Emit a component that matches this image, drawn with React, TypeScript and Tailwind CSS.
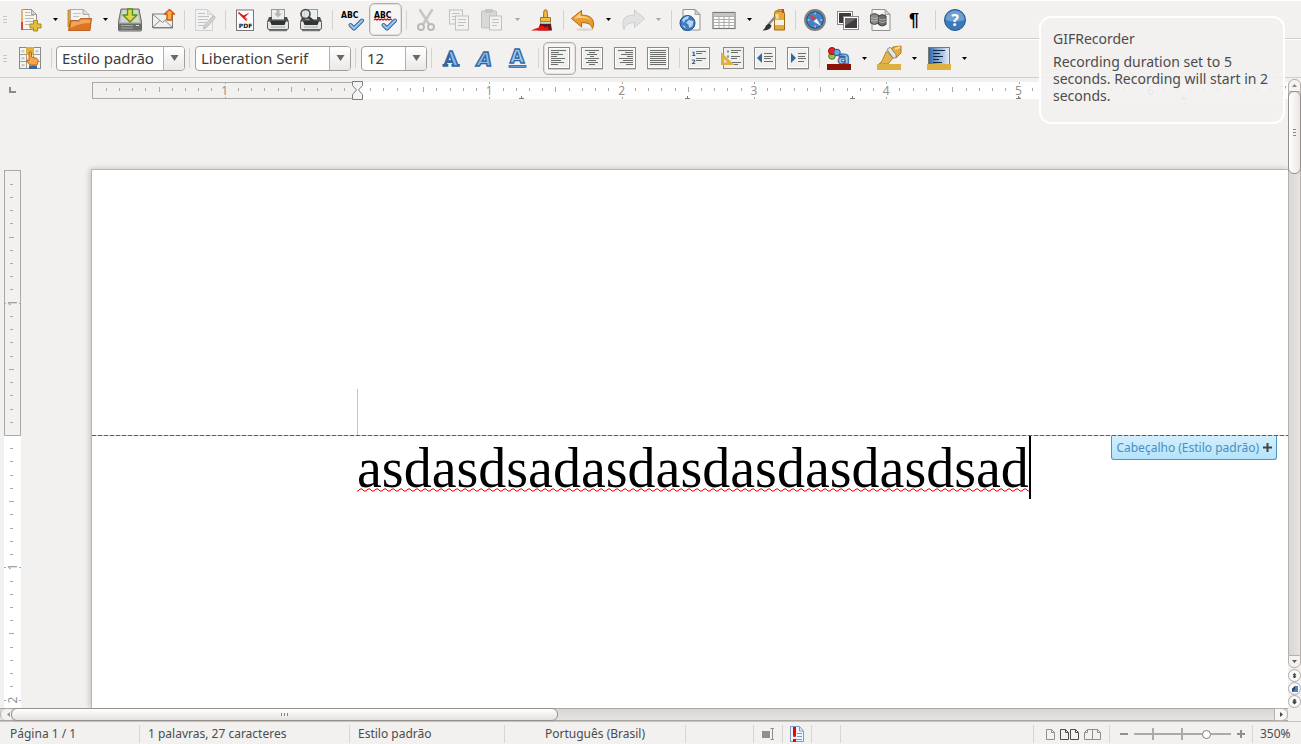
import type { ReactNode } from "react";

const UI = "font-['Noto_Sans','Open_Sans',sans-serif]";
const INCH = 132.3;

function Icon({ children }: { children: ReactNode }) {
  return (
    <svg viewBox="0 0 24 24" className="h-6 w-6 shrink-0 overflow-visible" aria-hidden="true">
      {children}
    </svg>
  );
}

type ToolProps = { label: string; children: ReactNode; active?: boolean; faded?: boolean };

function Tool({ label, children, active, faded }: ToolProps) {
  return (
    <button
      type="button"
      aria-label={label}
      aria-pressed={active}
      disabled={faded}
      className={
        active
          ? "flex h-[33px] w-[33px] shrink-0 items-center rounded-[5px] border border-[#b3aea9] bg-[#f7f6f5] pl-[3px] shadow-[inset_0_0_0_1px_#e2dfdc]"
          : faded
            ? "flex h-[33px] w-[33px] shrink-0 items-center pl-1 opacity-35 grayscale"
            : "flex h-[33px] w-[33px] shrink-0 items-center pl-1"
      }
    >
      <Icon>{children}</Icon>
    </button>
  );
}

function Caret({ label, faded }: { label: string; faded?: boolean }) {
  return (
    <button type="button" aria-label={label} className="flex h-[33px] w-[17px] shrink-0 items-center justify-center pr-px">
      <svg viewBox="0 0 5 3" className="h-[3px] w-[5px]">
        <path d="M0 0h5L2.500 3z" fill={faded ? "#a8a5a2" : "#000"} />
      </svg>
    </button>
  );
}

function Sep() {
  return (
    <div className="flex w-2 shrink-0 justify-center">
      <div className="h-5 w-px bg-[#d5d2cf]" />
    </div>
  );
}

function Grip() {
  return (
    <div className="flex w-[14px] shrink-0 flex-col gap-[2px] pl-[3px]">
      <div className="h-px w-1 bg-[#c9c6c3]" />
      <div className="h-px w-1 bg-[#c9c6c3]" />
      <div className="h-px w-1 bg-[#c9c6c3]" />
    </div>
  );
}

function Combo({ label, value, width }: { label: string; value: string; width: string }) {
  return (
    <div className={`grid h-[25px] shrink-0 overflow-hidden rounded-[4px] border border-[#a39e99] bg-white ${width}`}>
      <select
        aria-label={label}
        defaultValue={value}
        className="col-start-1 row-start-1 appearance-none bg-transparent pl-[5px] text-[15px] leading-[22px] text-[#3c3c3c] outline-none"
      >
        <option>{value}</option>
      </select>
      <span className="pointer-events-none col-start-1 row-start-1 flex w-[21px] items-center justify-center justify-self-end border-l border-[#b5b0ab] bg-gradient-to-b from-white to-[#ebe9e7]">
        <svg viewBox="0 0 9 6" className="h-[6px] w-[9px]">
          <path d="M.5 0h8L4.500 6z" fill="#6b6763" />
        </svg>
      </span>
    </div>
  );
}

function Check() {
  return (
    <>
      <path d="M10.500 17l3.500 3.500 8-8" fill="none" stroke="#2d5f9c" strokeWidth="4" strokeLinecap="round" strokeLinejoin="round" />
      <path d="M10.500 17l3.500 3.500 8-8" fill="none" stroke="#9cc6ee" strokeWidth="2.200" strokeLinecap="round" strokeLinejoin="round" />
    </>
  );
}

function Abc() {
  return (
    <text x="1" y="10" fontSize="8.500" fontWeight="700" fontFamily="DejaVu Sans Condensed, DejaVu Sans" fill="#000">
      ABC
    </text>
  );
}

function Sheet({ x = 3, y = 1.5, w = 17, h = 21 }: { x?: number; y?: number; w?: number; h?: number }) {
  const fold = 5;
  return (
    <>
      <path
        d={`M${x} ${y}h${w - fold}l${fold} ${fold}v${h - fold}h${-w}z`}
        fill="#f6f6f5"
        stroke="#92928f"
        strokeWidth="1"
        strokeLinejoin="round"
      />
      <path d={`M${x + w - fold} ${y}v${fold}h${fold}z`} fill="#d5d5d2" stroke="#92928f" strokeWidth=".8" />
    </>
  );
}

function Frame() {
  return (
    <>
      <rect x="1" y="23" width="22" height="1" fill="#cfccc9" />
      <rect x="1.500" y="1.500" width="21" height="21" fill="#efefed" stroke="#888a85" />
      <rect x="2.500" y="2.500" width="19" height="19" fill="none" stroke="#fff" />
    </>
  );
}

function Printer({ children }: { children?: ReactNode }) {
  return (
    <>
      <rect x="5.500" y="1.500" width="13" height="10" fill="#eeeeec" stroke="#9a9a98" />
      <path d="M3 9h3v3h12V9h3l2 5H1z" fill="#4b4b4b" />
      <rect x="1.500" y="13" width="21" height="8.500" rx="1.500" fill="#e6e6e4" stroke="#5c5c5a" />
      <path d="M4 13h16l-1.500 4h-13z" fill="#2e3436" />
      <path d="M3 22.500h18" stroke="#777" strokeWidth="1.500" />
      <path d="M5 19h14" stroke="#bcbcba" strokeWidth="1.500" />
      {children}
    </>
  );
}

function Lines({ rows }: { rows: [number, number, number][] }) {
  return (
    <>
      {rows.map(([x1, x2, y], i) => (
        <path key={i} d={`M${x1} ${y + 0.5}H${x2}`} stroke="#6c6e6a" shapeRendering="crispEdges" />
      ))}
    </>
  );
}

function StandardBar() {
  return (
    <div className="flex h-[39px] shrink-0 items-center border-t border-b border-t-white border-b-[#d0cdca]">
      <Grip />
      <Tool label="Novo">
        <Sheet x={3.5} y={1.5} w={15} h={20} />
        <path d="M3 1h2v21H3z" fill="#e9b26c" />
        <path d="M3 14h2v8H3z" fill="#d9482e" />
        <path d="M7 4.500h5M7 7.500h9M7 10.500h9M7 13.500h8M7 16.500h5" stroke="#b9bab7" />
        <path d="M15.500 12.500h4v3.500H23v4h-3.500v3h-4v-3H12v-4h3.500z" fill="#e3bd3c" stroke="#a98a12" strokeLinejoin="round" />
      </Tool>
      <Caret label="Opções de novo" />
      <Tool label="Abrir">
        <path d="M0 2h7l2 3v14H0z" fill="#dca53e" stroke="#c17d11" strokeWidth=".8" />
        <path d="M2.500 1.500h13l5.500 5V16H2.500z" fill="#f4f4f2" stroke="#999" strokeWidth=".8" />
        <path d="M15 1.500v5h6" fill="#ddd" stroke="#999" strokeWidth=".8" />
        <path d="M5 5.500h8M5 8.500h6" stroke="#c5c5c2" />
        <path d="M2.500 12.500h8l2-2h11L22 22.500H.5z" fill="#df7420" stroke="#b3500c" strokeWidth=".8" />
        <path d="M3.500 13.500h7.500l2-2h9.500l-.5 3.500Q12 15 2.500 20z" fill="#efa562" />
      </Tool>
      <Caret label="Opções de abrir" />
      <Tool label="Salvar">
        <path d="M3 1h18l2.500 13v8q0 1-1 1H1.500q-1 0-1-1v-8z" fill="#b9bab7" stroke="#6a6c68" />
        <path d="M4.500 2h15l2 12h-19z" fill="#d5d6d3" />
        <path d="M1 15.500h22V22H1z" fill="#6b6d69" />
        <path d="M3 17.500h12M3 20h12" stroke="#a9aaa8" />
        <path d="M18 17.500h3" stroke="#ddd" />
        <path d="M9.500 1h5v6h4.500l-7 7-7-7h4.500z" fill="#e8cf55" stroke="#4e9a06" strokeWidth="1.400" strokeLinejoin="round" />
      </Tool>
      <Tool label="E-mail">
        <rect x="1.500" y="6" width="20" height="13.500" fill="#f0f0ee" stroke="#7d7f7b" />
        <path d="M2 19l7-6.500M21 19l-7-6.500M2 6.500l9.500 8 9.500-8" fill="none" stroke="#8d8f8b" />
        <path d="M2 20.500h20" stroke="#bbb" />
        <path d="M18.500 1.500l5 4.500h-2.500v6h-5V6h-2.500z" fill="#f0b04c" stroke="#d5520c" strokeWidth="1.300" strokeLinejoin="round" />
      </Tool>
      <Sep />
      <Tool label="Editar arquivo" faded>
        <Sheet x={3.5} y={1.5} w={17} h={21} />
        <Lines rows={[[6, 13, 5], [6, 17, 8], [6, 16, 11], [6, 14, 14], [6, 12, 17]]} />
        <path d="M21.500 7.500l2 2-9 10-3 1.500.8-3.500z" fill="#999" stroke="#555" />
      </Tool>
      <Sep />
      <Tool label="Exportar como PDF">
        <rect x="3.500" y="2" width="17" height="20.500" fill="#fdfdfd" stroke="#777" />
        <path d="M5 4l5.500 3.500 6-3-4.500 4.500 3.500 3-7-4z" fill="#e01010" />
        <path d="M5.500 4.500l8 8" stroke="#e01010" strokeWidth="1.500" />
        <text x="12.500" y="20" fontSize="6" fontWeight="700" fontFamily="DejaVu Sans" textAnchor="middle" fill="#111">PDF</text>
      </Tool>
      <Tool label="Imprimir">
        <Printer>
          <path d="M10.500 2h3v3.500H16L12 9.500 8 5.500h2.500z" fill="#b5b5b3" />
        </Printer>
      </Tool>
      <Tool label="Visualizar impressão">
        <Printer>
          <circle cx="6.500" cy="6" r="4.500" fill="#d9e2e8" fillOpacity=".8" stroke="#4a4a4a" strokeWidth="1.600" />
          <path d="M10 9.500l5.500 5" stroke="#3a3a3a" strokeWidth="2.500" strokeLinecap="round" />
        </Printer>
      </Tool>
      <Sep />
      <Tool label="Ortografia">
        <Abc />
        <Check />
      </Tool>
      <Tool label="Verificação automática" active>
        <Abc />
        <path d="M1 12l1.500-1 1.500 1 1.500-1 1.500 1 1.500-1 1.500 1 1.500-1 1.500 1 1.500-1 1.500 1 1.500-1 1.500 1" fill="none" stroke="#e00000" strokeWidth="1.200" />
        <Check />
      </Tool>
      <Sep />
      <Tool label="Cortar" faded>
        <path d="M6 2l8.500 13.500M18 2L9.500 15.500" stroke="#777" strokeWidth="2.500" strokeLinecap="round" />
        <circle cx="7" cy="19" r="3" fill="none" stroke="#555" strokeWidth="2" />
        <circle cx="17" cy="19" r="3" fill="none" stroke="#555" strokeWidth="2" />
      </Tool>
      <Tool label="Copiar" faded>
        <rect x="2.500" y="2" width="13" height="14" fill="#f4f4f4" stroke="#666" />
        <Lines rows={[[5, 13, 5], [5, 13, 8], [5, 9, 11]]} />
        <rect x="8.500" y="8" width="13" height="14" fill="#f4f4f4" stroke="#666" />
        <Lines rows={[[11, 19, 11], [11, 19, 14], [11, 17, 17]]} />
      </Tool>
      <Tool label="Colar" faded>
        <rect x="1.500" y="3" width="15" height="17" rx="1" fill="#aaa" stroke="#666" />
        <rect x="5" y="1" width="8" height="4" rx="1" fill="#777" />
        <rect x="9.500" y="8" width="12" height="14" fill="#f4f4f4" stroke="#666" />
        <Lines rows={[[12, 19, 11], [12, 19, 14], [12, 17, 17]]} />
      </Tool>
      <Caret label="Opções de colar" faded />
      <Tool label="Pincel de estilo">
        <path d="M14 2.500q2-1.500 3 0 .5 3 .5 7h-4q0-4 .5-7z" fill="#f0b848" stroke="#b06a10" />
        <path d="M10.500 9.500h10v4h-10z" fill="#eac04a" stroke="#a87818" />
        <path d="M10.500 13.500h10V16h-10z" fill="#d5d5d3" stroke="#777" strokeWidth=".7" />
        <path d="M10 16h11l1 6.500H8z" fill="#5a1a1a" />
        <path d="M1 22.500q4-2 8-3 2-2.500 4-1.500l2 1.500 3-1 1 4z" fill="#ee1111" />
      </Tool>
      <Sep />
      <Tool label="Desfazer">
        <ellipse cx="14" cy="21.500" rx="9" ry="1.500" fill="#dad7d4" />
        <path d="M10.500 2.500v4.500q11.500 0 12 8 .2 3-1 5.500-1-6-11-6v4.500L.5 10.500z" fill="#e89c34" stroke="#bb6a08" strokeLinejoin="round" />
        <path d="M9.500 4.500V8q7 0 10 4-4-2.500-10-2L3 10.500z" fill="#f5cf80" />
      </Tool>
      <Caret label="Opções de desfazer" />
      <Tool label="Refazer" faded>
        <path d="M13.500 2v5Q2 7 2 15q0 3 1 6.500 1-7 10.500-7v5l10-9z" fill="#c9c9c9" stroke="#888" strokeLinejoin="round" />
      </Tool>
      <Caret label="Opções de refazer" faded />
      <Sep />
      <Tool label="Hiperlink">
        <Sheet x={4} y={1.5} w={17} h={20.5} />
        <circle cx="8.500" cy="15" r="7.500" fill="#3d7dc4" stroke="#204a87" />
        <path d="M3 12q3-4 7-4l-1 3-3 1-1 3zM9.500 12l5 1-1 5-3 2-1.500-4-2-1zM3 17l3 1 1 3z" fill="#b5d5f2" />
      </Tool>
      <Tool label="Tabela">
        <rect x="1" y="4.500" width="22" height="16" fill="#fdfdfd" stroke="#777974" strokeWidth="1.200" />
        <path d="M1.500 5h21v3h-21z" fill="#c5c6c3" />
        <path d="M2 8.500h20M2 11.500h20M2 14.500h20M2 17.500h20M7 8v12M12 8v12M17 8v12" stroke="#a5a7a2" strokeWidth=".9" />
      </Tool>
      <Caret label="Opções de tabela" />
      <Tool label="Desenho">
        <path d="M12.500 22V5.500l1-2.500h8l1 2.500V22z" fill="#e0ad3c" stroke="#a36b12" />
        <path d="M15 3l1-1.500h4V3z" fill="#f0c860" stroke="#a36b12" strokeWidth=".7" />
        <path d="M20 1h2v4h-2z" fill="#d04a18" />
        <path d="M13 12h9v5h-9z" fill="#f7f2e0" />
        <path d="M13.500 6h3v5h-3z" fill="#f8dc90" />
        <path d="M12.500 9.500l-6 7" stroke="#8a8d8a" strokeWidth="2.500" strokeLinecap="round" />
        <path d="M7 15.500l2.500 2q-1 5-9 5 3-2 3.500-5z" fill="#333" />
      </Tool>
      <Sep />
      <Tool label="Navegador">
        <circle cx="12" cy="12" r="9.700" fill="#4083c8" stroke="#7d8081" strokeWidth="2.400" />
        <circle cx="12" cy="12" r="8.200" fill="none" stroke="#204a87" />
        <path d="M12 4.500v2M12 17.500v2M4.500 12h2M17.500 12h2" stroke="#d8e8f8" />
        <path d="M6 6l7.500 4.500-3 3z" fill="#e03a2a" />
        <path d="M18 18l-7.500-4.500 3-3z" fill="#f4f4f4" />
      </Tool>
      <Tool label="Galeria">
        <rect x="1.500" y="3.500" width="15" height="13" fill="#fff" stroke="#888a85" />
        <rect x="3" y="5" width="12" height="10" fill="#3c3a3d" />
        <rect x="7.500" y="8.500" width="15" height="13" fill="#fff" stroke="#888a85" />
        <rect x="9" y="10" width="12" height="10" fill="#3f3b3f" />
        <path d="M9 10h12L9 18z" fill="#6c686b" />
      </Tool>
      <Tool label="Fontes de dados">
        <Sheet x={3} y={1.5} w={18} h={21} />
        <path d="M1.500 7q4-3 8 0v8q-4 3-8 0z" fill="#8a8a86" stroke="#4a4a48" />
        <path d="M9.500 8q4-3 7.500 0v8.500q-4 3-7.500 0z" fill="#6d6d6a" stroke="#3e3e3c" />
        <path d="M1.500 9.500q4 2 8 0M1.500 12q4 2 8 0M10 11q3 2 7 0M10 13.500q3 2 7 0" fill="none" stroke="#c0c0bd" strokeWidth=".8" />
      </Tool>
      <Tool label="Caracteres não imprimíveis">
        <text x="12" y="18" fontSize="18" fontWeight="700" fontFamily="Liberation Sans" textAnchor="middle" fill="#000">¶</text>
      </Tool>
      <Sep />
      <Tool label="Ajuda">
        <circle cx="12" cy="12" r="10.500" fill="#3a78ba" stroke="#27588f" />
        <path d="M2.500 12a9.500 9.500 0 0119 0q-9.500 3-19 0z" fill="#6d9fd2" />
        <text x="12" y="18" fontSize="16" fontWeight="700" fontFamily="Noto Sans" textAnchor="middle" fill="#fff">?</text>
      </Tool>
    </div>
  );
}

function FormatBar() {
  return (
    <div className="flex h-[39px] shrink-0 items-center border-t border-b border-t-white border-b-[#d0cdca] pb-px">
      <Grip />
      <Tool label="Estilos e formatação">
        <rect x="1.500" y="1.500" width="21" height="21" fill="#f5f5f4" stroke="#888a85" />
        <path d="M8.500 1.500v21M15.500 1.500v21M1.500 8.500h21M1.500 15.500h21" stroke="#999b96" />
        <path d="M3.500 4h3v2.500h-3zM17.500 4h3v2.500h-3zM3.500 11h3v2.500h-3zM3.500 18h3v2.500h-3z" fill="#c9cac7" />
        <rect x="8" y="1" width="8" height="8" fill="#deb040" />
        <path d="M11 6.500q1.500-1.500 2.500 0V11l5.500 1.500q1.500 1 1 3L19 19h-7l-3.500-4q0-2 2.500-.5z" fill="#f5a447" stroke="#b85b0c" strokeWidth=".9" />
        <path d="M11 19.500h8v3.500h-8z" fill="#3465a4" />
      </Tool>
      <Sep />
      <div className="flex items-center pl-px">
        <Combo label="Estilo do parágrafo" value="Estilo padrão" width="w-[129px]" />
      </div>
      <Sep />
      <div className="flex items-center pl-[2px]">
        <Combo label="Nome da fonte" value="Liberation Serif" width="w-[156px]" />
      </div>
      <Sep />
      <div className="flex items-center pl-[2px]">
        <Combo label="Tamanho da fonte" value="12" width="w-[66px]" />
      </div>
      <Sep />
      <Tool label="Negrito">
        <text x="12" y="19.500" fontSize="20" fontWeight="700" fontFamily="DejaVu Serif" textAnchor="middle" fill="#8db6e4" stroke="#2f66a5" strokeWidth="1.400">A</text>
      </Tool>
      <Tool label="Itálico">
        <text x="12.500" y="19.500" fontSize="20" fontWeight="700" fontStyle="italic" fontFamily="DejaVu Sans" textAnchor="middle" fill="#8db6e4" stroke="#2f66a5" strokeWidth="1.400">A</text>
      </Tool>
      <Tool label="Sublinhado">
        <text x="12" y="16.500" fontSize="19" fontWeight="700" fontFamily="DejaVu Sans" textAnchor="middle" fill="#a3c6ec" stroke="#2f66a5" strokeWidth="1.300">A</text>
        <rect x="4" y="19.500" width="17" height="2" fill="#5f97d2" stroke="#2f66a5" strokeWidth=".8" />
      </Tool>
      <Sep />
      <div className="flex items-center pl-px">
        <Tool label="Alinhar à esquerda" active>
          <Frame />
          <Lines rows={[[4, 19, 4], [4, 12, 6], [4, 16, 8], [4, 10, 10], [4, 18, 12], [4, 14, 14], [4, 17, 16], [4, 11, 18]]} />
        </Tool>
        <Tool label="Centralizar">
          <Frame />
          <Lines rows={[[5, 19, 4], [9, 15, 6], [7, 17, 8], [10, 14, 10], [5, 19, 12], [8, 16, 14], [6, 18, 16], [9, 15, 18]]} />
        </Tool>
        <Tool label="Alinhar à direita">
          <Frame />
          <Lines rows={[[5, 20, 4], [12, 20, 6], [8, 20, 8], [14, 20, 10], [6, 20, 12], [10, 20, 14], [7, 20, 16], [13, 20, 18]]} />
        </Tool>
        <Tool label="Justificar">
          <Frame />
          <Lines rows={[[4, 20, 4], [4, 20, 6], [4, 20, 8], [4, 20, 10], [4, 20, 12], [4, 20, 14], [4, 20, 16], [4, 20, 18]]} />
        </Tool>
      </div>
      <Sep />
      <Tool label="Numeração">
        <Frame />
        <text x="4.500" y="9.500" fontSize="6" fontWeight="700" fontFamily="DejaVu Sans" fill="#204a87">1</text>
        <text x="4.500" y="17.500" fontSize="6" fontWeight="700" fontFamily="DejaVu Sans" fill="#204a87">2</text>
        <Lines rows={[[9, 19, 5], [9, 15, 7], [9, 19, 12], [9, 15, 14]]} />
      </Tool>
      <Tool label="Marcadores">
        <rect x="3.500" y="1.500" width="20" height="21" fill="#efefed" stroke="#888a85" />
        <path d="M7 5.500h2M7 10.500h2" stroke="#888a85" strokeWidth="2" />
        <Lines rows={[[11, 21, 4], [11, 18, 6], [11, 20, 10], [11, 17, 12], [12, 21, 16], [14, 18, 18]]} />
        <path d="M1 6l13.500 13H1z" fill="#deb040" />
        <path d="M4 13l3.500 3.500H4z" fill="#f4e9c8" />
      </Tool>
      <Tool label="Diminuir recuo">
        <Frame />
        <path d="M9 7v10L4 12z" fill="#3465a4" />
        <Lines rows={[[11, 19, 7], [11, 20, 10], [11, 18, 12], [11, 20, 15]]} />
      </Tool>
      <Tool label="Aumentar recuo">
        <Frame />
        <path d="M5 7v10l5-5z" fill="#3465a4" />
        <Lines rows={[[12, 20, 7], [12, 19, 10], [12, 20, 12], [12, 18, 15]]} />
      </Tool>
      <Sep />
      <Tool label="Cor da fonte">
        <circle cx="5" cy="10" r="3.300" fill="#8cc84b" stroke="#4e7a1a" />
        <circle cx="5" cy="5" r="3.500" fill="#ee2020" stroke="#8c1010" />
        <circle cx="10" cy="6.500" r="3.300" fill="#6fa8dc" stroke="#1f5a96" />
        <text x="16.500" y="18" fontSize="18" fontWeight="700" fontFamily="DejaVu Sans" textAnchor="middle" fill="#a9cbed" stroke="#2f66a5" strokeWidth="1.200">a</text>
        <rect x="0" y="18" width="24" height="6" fill="#8f1206" />
      </Tool>
      <Caret label="Escolher cor da fonte" />
      <Tool label="Realçar">
        <path d="M16 1l8-1v7l-5 5-7-6z" fill="#e6ab3a" stroke="#b57714" />
        <path d="M18 3l5-2" stroke="#fadc98" strokeWidth="2" />
        <path d="M10 3.500q4-4 5 0l4 5q1 4-3 3.500z" fill="#e4e4e2" stroke="#888" />
        <path d="M9.500 5l6.500 7-5 6H2l3-3z" fill="#e3b552" stroke="#b9821e" />
        <rect x="0" y="18" width="24" height="6" fill="#deb040" />
      </Tool>
      <Caret label="Escolher cor de realce" />
      <Tool label="Cor do plano de fundo">
        <defs>
          <linearGradient id="sheet-blue" x1="0" y1="0" x2="1" y2="0">
            <stop offset="0" stopColor="#2b62a4" />
            <stop offset=".4" stopColor="#7ba6d6" />
            <stop offset="1" stopColor="#e6eef6" />
          </linearGradient>
        </defs>
        <rect x="1.500" y="1.500" width="21" height="20" fill="url(#sheet-blue)" stroke="#777974" />
        <path d="M6 4.500h12M6 7.500h7M6 10.500h10M6 13.500h6M6 16.500h9" stroke="#16283c" shapeRendering="crispEdges" />
        <rect x="0" y="18" width="24" height="6" fill="#deb040" />
      </Tool>
      <Caret label="Escolher cor de fundo" />
    </div>
  );
}

const range = (from: number, to: number) => Array.from({ length: to - from + 1 }, (_, i) => from + i);

function HorizontalRuler() {
  const zero = 265;
  return (
    <svg className="h-[22px] min-w-0 flex-1" fontSize="12" fontFamily="Noto Sans">
      <rect x="0" y="4" width="100%" height="17" fill="#fff" />
      <rect x=".5" y="4.500" width={zero} height="16" fill="#f2f1f0" stroke="#a9a9a9" />
      <g shapeRendering="crispEdges" fill="#a9a9a9">
        {range(-19, 90).map((n) => {
          const x = Math.round(zero + (n * INCH) / 10);
          if (n === 0) return null;
          if (n % 10 === 0)
            return (
              <g key={n}>
                <rect x={x} y="4" width="1" height="2" />
                <rect x={x} y="19" width="1" height="2" />
              </g>
            );
          const half = n % 5 === 0;
          return <rect key={n} x={x} y={half ? 9 : 10} width="1" height={half ? 5 : 3} />;
        })}
      </g>
      {[-1, 1, 2, 3, 4, 5, 6, 7].map((n) => (
        <text key={n} x={zero + n * INCH} y="17" textAnchor="middle" fill="#929292">
          {Math.abs(n)}
        </text>
      ))}
      {range(1, 5).map((n) => {
        const x = Math.round(zero + n * 165.4) - 1;
        return <path key={n} d={`M${x - 2} 20.500h5M${x + 0.5} 17.500v3`} stroke="#7d7d7d" shapeRendering="crispEdges" />;
      })}
      <path d="M260.500 3.500h10v4l-4 4.500 4 4.500v5h-10v-5l4-4.500-4-4.500z" fill="#f4f4f4" stroke="#7d7d7d" />
    </svg>
  );
}

function VerticalRuler() {
  const top = 70;
  const zero = 335;
  return (
    <svg className="h-full w-[21px] shrink-0" fontSize="12" fontFamily="Noto Sans">
      <rect x="4" y={top} width="17" height="100%" fill="#fff" />
      <rect x="4.500" y={top + 0.5} width="16" height={zero - top} fill="#f2f1f0" stroke="#a9a9a9" />
      <g shapeRendering="crispEdges" fill="#a9a9a9">
        {range(-19, 90).map((n) => {
          const y = Math.round(zero + (n * INCH) / 10);
          if (n === 0) return null;
          if (n % 10 === 0)
            return (
              <g key={n}>
                <rect x="4" y={y} width="2" height="1" />
                <rect x="19" y={y} width="2" height="1" />
              </g>
            );
          const half = n % 5 === 0;
          return <rect key={n} x={half ? 9 : 10} y={y} width={half ? 5 : 3} height="1" />;
        })}
      </g>
      {[-1, 1, 2].map((n) => (
        <text key={n} textAnchor="middle" fill="#929292" transform={`translate(17 ${Math.round(zero + n * INCH)}) rotate(-90)`}>
          {Math.abs(n)}
        </text>
      ))}
    </svg>
  );
}

function VerticalScrollbar() {
  const arrow = "flex h-[13px] w-[13px] shrink-0 items-center justify-center border border-[#b5b0ab] bg-[#f4f3f2]";
  const round = "flex h-[13px] w-[13px] shrink-0 items-center justify-center rounded-full border border-[#b0aba6] bg-[#faf9f9]";
  return (
    <div className="flex w-[13px] shrink-0 flex-col pt-px">
      <button type="button" aria-label="Rolar para cima" className={`${arrow} rounded-t-[6px]`}>
        <svg viewBox="0 0 5 3" className="h-[3px] w-[5px]"><path d="M0 3h5L2.500 0z" fill="#8a8683" /></svg>
      </button>
      <div className="flex min-h-0 flex-1 flex-col border-x border-[#b5b0ab] bg-gradient-to-r from-[#d9d7d5] to-[#e6e4e2]">
        <div className="-mx-px -mt-px flex h-[83px] shrink-0 flex-col items-center justify-center gap-[2px] rounded-[6px] border border-[#96918c] bg-gradient-to-r from-white to-[#e9e7e5]">
          <div className="h-px w-[3px] bg-[#8a8683]" />
          <div className="h-px w-[3px] bg-[#8a8683]" />
          <div className="h-px w-[3px] bg-[#8a8683]" />
        </div>
      </div>
      <button type="button" aria-label="Rolar para baixo" className={`${arrow} rounded-b-[6px]`}>
        <svg viewBox="0 0 5 3" className="h-[3px] w-[5px]"><path d="M0 0h5L2.500 3z" fill="#5c5956" /></svg>
      </button>
      <div className="flex shrink-0 flex-col pt-px">
        <button type="button" aria-label="Página anterior" className={round}>
          <svg viewBox="0 0 5 6" className="h-[6px] w-[5px]"><path d="M2.500 0L4.500 2h-1v1h1L3.500 4v1h-2V4l-1-1h1V2h-1z" fill="#444" /></svg>
        </button>
        <button type="button" aria-label="Navegação" className={round}>
          <svg viewBox="0 0 6 6" className="h-[6px] w-[6px]"><path d="M0 6V3l3-3h3v6z" fill="#4a82c0" /><path d="M0 6V3l3-3v3z" fill="#1d3f6e" /></svg>
        </button>
        <button type="button" aria-label="Próxima página" className={round}>
          <svg viewBox="0 0 5 6" className="h-[6px] w-[5px]"><path d="M1.500 0h2v1.500h1l-1 1h1v1l-2 2-2-2v-1h1l-1-1h1z" fill="#444" /></svg>
        </button>
      </div>
      <div className="h-[13px] shrink-0" />
    </div>
  );
}

function HorizontalScrollbar() {
  return (
    <div className="flex h-[13px] shrink-0 border-y border-[#a9a5a1] bg-gradient-to-b from-[#d8d6d4] to-[#e6e4e2]">
      <button type="button" aria-label="Rolar para a esquerda" className="flex w-[11px] shrink-0 items-center justify-center rounded-l-full border-l border-[#b5b0ab] bg-[#f2f1f0] pl-1">
        <svg viewBox="0 0 3 5" className="h-[5px] w-[3px]"><path d="M3 0v5L0 2.500z" fill="#9a9693" /></svg>
      </button>
      <div className="min-w-0 flex-1">
        <div className="-my-px flex h-[13px] w-[547px] items-center justify-center gap-[2px] rounded-[6px] border border-[#96918c] bg-gradient-to-b from-white to-[#e4e2e0]">
          <div className="h-[3px] w-px bg-[#8a8683]" />
          <div className="h-[3px] w-px bg-[#8a8683]" />
          <div className="h-[3px] w-px bg-[#8a8683]" />
        </div>
      </div>
      <button type="button" aria-label="Rolar para a direita" className="-my-px flex w-[14px] shrink-0 items-center justify-center rounded-r-[6px] border border-[#b5b0ab] bg-[#f7f6f5]">
        <svg viewBox="0 0 3 5" className="h-[5px] w-[3px]"><path d="M0 0v5l3-2.500z" fill="#4a4745" /></svg>
      </button>
    </div>
  );
}

function Page() {
  return (
    <div className="min-h-0 min-w-0 flex-1 overflow-hidden pt-[69px] pl-[70px]">
      <div className="flex h-full flex-col border-t border-l border-[#b9b7b5] bg-white shadow-[-1px_0_6px_rgba(0,0,0,0.22)]">
        <div className="flex h-[265px] shrink-0 items-end pl-[265px]">
          <div className="h-[46px] w-px bg-[#c4c4c4]" />
        </div>
        <div className="h-px shrink-0 bg-[repeating-linear-gradient(90deg,#4f5f6c_0px,#4f5f6c_4px,#b4cbdc_4px,#b4cbdc_6px)]" />
        <div className="flex items-start justify-between pr-[11px] pl-[265px]">
          <div className="flex">
            <div>
              <div className="font-['Liberation_Serif',serif] text-[56px] leading-[64px] whitespace-nowrap text-black">
                asdasdsadasdasdasdasdasdsad
              </div>
              <svg className="-mt-[12px] block h-1 w-full">
                <defs>
                  <pattern id="wave" width="8" height="4" patternUnits="userSpaceOnUse">
                    <path d="M0 3h1l2-2h2l2 2h1" fill="none" stroke="#f00000" />
                  </pattern>
                </defs>
                <rect width="100%" height="4" fill="url(#wave)" />
              </svg>
            </div>
            <div className="h-[63px] w-[2px] bg-black" />
          </div>
          <button
            type="button"
            className="flex h-6 items-center gap-1 rounded-b-[3px] border border-t-0 border-[#4f93c4] bg-gradient-to-b from-[#d3effe] to-[#b4e3fb] px-1 text-xs whitespace-nowrap text-[#4a8fc0]"
          >
            <span>Cabeçalho (Estilo padrão)</span>
            <svg viewBox="0 0 9 9" className="h-[9px] w-[9px]"><path d="M4.500 0v9M0 4.500h9" stroke="#444" strokeWidth="2" /></svg>
          </button>
        </div>
      </div>
    </div>
  );
}

function StatusBar() {
  const cell = "mt-[3px] mb-px flex shrink-0 items-center border-r border-[#d8d5d2]";
  return (
    <footer className="flex h-[23px] shrink-0 border-t border-[#c4c1be] text-xs whitespace-nowrap text-[#4c4c4c]">
      <div className={`${cell} w-[140px] pl-[10px]`}>Página 1 / 1</div>
      <div className={`${cell} w-[210px] pl-2`}>1 palavras, 27 caracteres</div>
      <div className={`${cell} w-[155px] pl-2`}>Estilo padrão</div>
      <div className={`${cell} w-[181px] justify-center`}>Português (Brasil)</div>
      <div className={`${cell} w-[68px]`} />
      <div className={`${cell} w-[29px] justify-center`}>
        <svg viewBox="0 0 12 12" className="h-3 w-3">
          <rect x="0" y="3" width="8" height="7" fill="#8f8f8f" />
          <path d="M8.500.5h3.500M8.500 11.500h3.500M10.500.5v11" stroke="#8f8f8f" />
        </svg>
      </div>
      <div className={`${cell} w-[29px] justify-center`}>
        <svg viewBox="0 0 14 16" className="h-4 w-[14px]">
          <path d="M.5.500h9l4 4.500v10.500H.5z" fill="#eef4fb" stroke="#7c9cc8" />
          <path d="M9.500.5V5h4M7 7.500h5M7 10.500h5M6 13.500h6" fill="none" stroke="#7c9cc8" />
          <path d="M3 1h3v8l-.5 2h-2L3 9zM3 13h3v3H3z" fill="#f00000" />
        </svg>
      </div>
      <div className={`${cell} w-[29px]`} />
      <div className="mt-[3px] mb-px min-w-0 flex-1 border-r border-[#d8d5d2]" />
      <div className={`${cell} w-[76px] gap-[5px] pl-3`}>
        <button type="button" aria-label="Página única">
          <svg viewBox="0 0 9 12" className="h-3 w-[9px]"><path d="M.5 1.500h5l3 3v7h-8zM5.500 1.500v3h3" fill="none" stroke="#8f8f8f" /></svg>
        </button>
        <button type="button" aria-label="Várias páginas">
          <svg viewBox="0 0 19 12" className="h-3 w-[19px]"><path d="M.5 1.500h5l3 3v7h-8zM5.500 1.500v3h3M10.500 1.500h5l3 3v7h-8zM15.500 1.500v3h3" fill="none" stroke="#4c4c4c" /></svg>
        </button>
        <button type="button" aria-label="Modo livro">
          <svg viewBox="0 0 17 12" className="h-3 w-[17px]"><path d="M8.500 1.500v10h-8v-7l3-3zM3.500 1.500v3h-3M8.500 1.500h5l3 3v7h-8M13.500 1.500v3h3" fill="none" stroke="#8f8f8f" /></svg>
        </button>
      </div>
      <div className={`${cell} w-[143px] gap-[6px] pl-[10px]`}>
        <button type="button" aria-label="Reduzir">
          <svg viewBox="0 0 8 8" className="h-2 w-2"><path d="M0 4h8" stroke="#8f8f8f" strokeWidth="2" /></svg>
        </button>
        <div className="grid h-3 w-[97px] items-center">
          <svg viewBox="0 0 97 12" className="col-start-1 row-start-1 h-3 w-[97px]">
            <path d="M0 6h97M19 0v12M48 0v12" stroke="#ababab" strokeWidth="2" />
          </svg>
          <input
            type="range"
            aria-label="Zoom"
            defaultValue={77}
            className="col-start-1 row-start-1 m-0 h-3 w-full appearance-none bg-transparent [&::-webkit-slider-thumb]:h-[9px] [&::-webkit-slider-thumb]:w-[9px] [&::-webkit-slider-thumb]:appearance-none [&::-webkit-slider-thumb]:rounded-full [&::-webkit-slider-thumb]:border [&::-webkit-slider-thumb]:border-[#7d7d7d] [&::-webkit-slider-thumb]:bg-white"
          />
        </div>
        <button type="button" aria-label="Ampliar">
          <svg viewBox="0 0 8 8" className="h-2 w-2"><path d="M0 4h8M4 0v8" stroke="#8f8f8f" strokeWidth="2" /></svg>
        </button>
      </div>
      <div className="mt-[3px] mb-px flex w-[48px] shrink-0 items-center pl-[7px]">350%</div>
    </footer>
  );
}

function Notification() {
  return (
    <aside className="absolute top-4 right-4 h-[108px] w-[246px] rounded-[12px] border-2 border-white bg-[#f2f1f0]/90 px-3 pt-3 text-[#4c4c4c]">
      <h2 className="text-sm leading-[18px]">GIFRecorder</h2>
      <p className="mt-[5px] text-sm leading-[17px]">
        Recording duration set to 5 seconds. Recording will start in 2 seconds.
      </p>
    </aside>
  );
}

export default function App() {
  return (
    <div className={`relative flex h-screen flex-col overflow-hidden bg-[#f2f1f0] ${UI}`}>
      <StandardBar />
      <FormatBar />
      <main className="flex min-h-0 flex-1">
        <div className="flex min-w-0 flex-1 flex-col">
          <div className="flex shrink-0">
            <div className="w-[92px] shrink-0 pt-[9px] pl-[9px]">
              <div className="h-[6px] w-[7px] border-b-2 border-l-2 border-[#8a8a8a]" />
            </div>
            <HorizontalRuler />
          </div>
          <div className="flex min-h-0 flex-1">
            <VerticalRuler />
            <Page />
          </div>
          <HorizontalScrollbar />
        </div>
        <VerticalScrollbar />
      </main>
      <StatusBar />
      <Notification />
    </div>
  );
}
